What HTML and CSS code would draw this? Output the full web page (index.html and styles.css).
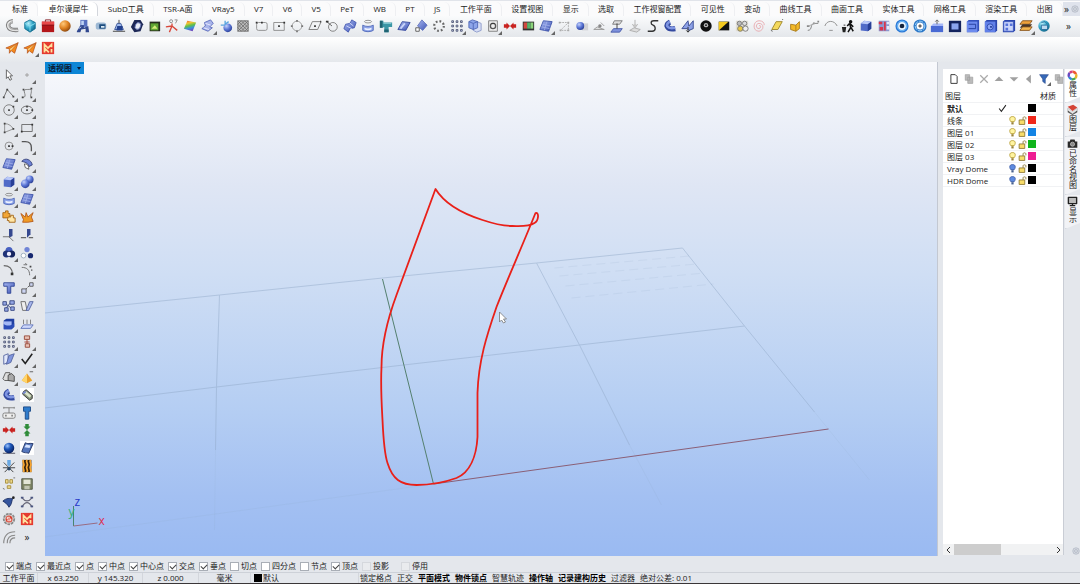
FILE: index.html
```html
<!DOCTYPE html>
<html lang="zh-CN">
<head>
<meta charset="utf-8">
<meta name="viewport" content="width=device-width, initial-scale=1">
<title>透视图</title>
<link rel="stylesheet" href="styles.css">
</head>
<body>
<svg class="sprite" width="0" height="0" aria-hidden="true">
<defs>
<linearGradient id="bl" x1="0" y1="0" x2="1" y2="1"><stop offset="0" stop-color="#a9b9f2"/><stop offset="1" stop-color="#3d53b4"/></linearGradient>
<linearGradient id="rb" x1="0" y1="0" x2="0.3" y2="1"><stop offset="0" stop-color="#e8432f"/><stop offset=".3" stop-color="#f5c534"/><stop offset=".55" stop-color="#5fc24a"/><stop offset=".8" stop-color="#3c8de0"/><stop offset="1" stop-color="#6b4fc0"/></linearGradient>
<radialGradient id="ball" cx=".35" cy=".3" r=".8"><stop offset="0" stop-color="#c3d1fb"/><stop offset=".5" stop-color="#5b76d6"/><stop offset="1" stop-color="#23378c"/></radialGradient>
<radialGradient id="oball" cx=".35" cy=".3" r=".8"><stop offset="0" stop-color="#ffc97a"/><stop offset=".5" stop-color="#e08322"/><stop offset="1" stop-color="#7c3d0c"/></radialGradient>
<radialGradient id="dball" cx=".35" cy=".3" r=".8"><stop offset="0" stop-color="#9cc4ff"/><stop offset=".4" stop-color="#1d56b8"/><stop offset="1" stop-color="#04164f"/></radialGradient>
<radialGradient id="cball" cx=".35" cy=".3" r=".8"><stop offset="0" stop-color="#b8eefa"/><stop offset=".5" stop-color="#2fa4c6"/><stop offset="1" stop-color="#0d5a80"/></radialGradient>
</defs>
<symbol id="pipeg" viewBox="0 0 16 16"><path d="M9 2.500C4 3 3 6 4 9s5 4 11 3.500" fill="none" stroke="#777" stroke-width="5"/><path d="M9 2.500C4 3 3 6 4 9s5 4 11 3.500" fill="none" stroke="#e2e2e2" stroke-width="3"/><path d="M9 3C5 4 4 6 5 9s5 3 10 3" fill="none" stroke="#999"/></symbol>
<symbol id="gem" viewBox="0 0 16 16"><path d="M8 1l6 3v7l-6 4-6-4V4z" fill="url(#cball)" stroke="#147295"/><path d="M2 5l6 3 6-3M8 8v6" stroke="#8ce2f2" fill="none"/></symbol>
<symbol id="toolbox" viewBox="0 0 16 16"><path d="M1 3h14v12H1z" fill="#b3161a"/><path d="M1 3h14v4H1z" fill="#e8494a"/><path d="M5 3V1h6v2M1 7h14" stroke="#7d0d12" fill="none"/></symbol>
<symbol id="osphere" viewBox="0 0 16 16"><circle cx="8" cy="8" r="6.500" fill="url(#oball)"/></symbol>
<symbol id="robot" viewBox="0 0 16 16"><path d="M5 1h8v8H5z" fill="#5770c0"/><path d="M6 2h3v5H6z" fill="#bdd2f4"/><path d="M1 14l4-7h4v3l5-2 1 7h-4v-4l-5 1-1 3H1z" fill="#31488f"/><path d="M3 11l3-2" stroke="#c9d9f6"/></symbol>
<symbol id="pill" viewBox="0 0 16 16"><rect x="2" y="4" width="12" height="8" rx="3" fill="#9db8d4"/><path d="M6 6h7v5H6z" fill="#1b4b7e"/><path d="M8 8h4v2H8z" fill="#dbeaf6"/></symbol>
<symbol id="cone" viewBox="0 0 16 16"><path d="M6 5h4l3 7H3z" fill="#9fb9ec" stroke="#344f93"/><path d="M8 1v4M1 14h14" stroke="#333"/><path d="M6 8h6v5H5z" fill="#22408f"/></symbol>
<symbol id="nut" viewBox="0 0 16 16"><path d="M5 1h7l3 5-3 8-7 1-4-6z" fill="#1d2857"/><ellipse cx="9" cy="8" rx="3" ry="4" fill="#e9edf8" stroke="#6676b4" transform="rotate(25 9 8)"/></symbol>
<symbol id="picg" viewBox="0 0 16 16"><path d="M3 3h12v11H3z" fill="#252b1d"/><path d="M4 5h9v8H4z" fill="#5fa532"/><path d="M5 11l4-4 3 4z" fill="#d4ed7a"/></symbol>
<symbol id="branch" viewBox="0 0 16 16"><path d="M5 15l3-7M8 8l6 5M8 8L1 9M8 8V5" stroke="#d8473a" stroke-width="1.500" fill="none"/><circle cx="7" cy="2.500" r="1.700" fill="none" stroke="#888"/><path d="M11 1h3l-2 4" stroke="#888" fill="none"/></symbol>
<symbol id="rainbow" viewBox="0 0 16 16"><path d="M5 2l10 2-4 10L1 11z" fill="url(#rb)"/></symbol>
<symbol id="net" viewBox="0 0 16 16"><path d="M4 4l7-3 3 4-4 4 3 1-5 4-7-3 4-3z" fill="#a8b4ea" stroke="#5868ba"/><path d="M5 5l6 2M3 10l6 2" stroke="#eef" fill="none"/></symbol>
<symbol id="balls" viewBox="0 0 16 16"><circle cx="10" cy="10" r="5" fill="url(#ball)"/><path d="M2 7h5M7 2v4l4-3" stroke="#57a4df" stroke-width="1.500" fill="none"/></symbol>
<symbol id="hatch" viewBox="0 0 16 16"><path d="M2 2h12v12H2z" fill="#bbb" stroke="#777"/><path d="M2 6l4-4M2 10l8-8M2 14L14 2M6 14l8-8M10 14l4-4M2 10l4 4M2 6l8 8M2 2l12 12M6 2l8 8M10 2l4 4" stroke="#666" stroke-width=".8"/></symbol>
<symbol id="rrect" viewBox="0 0 16 16"><rect x="3" y="4" width="12" height="9" rx="2" fill="none" stroke="#888"/><path d="M2 3h2v2H2zM8 3h2v2H8z" fill="#333"/></symbol>
<symbol id="crect" viewBox="0 0 16 16"><path d="M2 4h12v9H2z" fill="none" stroke="#888"/><path d="M7 7h2v2H7zM13 3h2v2h-2z" fill="#333"/></symbol>
<symbol id="circ" viewBox="0 0 16 16"><circle cx="8" cy="8" r="6" fill="none" stroke="#777"/><path d="M7 7h2v2H7zM12 3h2v2h-2z" fill="#444"/></symbol>
<symbol id="scirc" viewBox="0 0 16 16"><circle cx="8" cy="8" r="4.500" fill="none" stroke="#888"/><path d="M7 7h2v2H7zM11 7h2v2h-2z" fill="#333"/></symbol>
<symbol id="dcirc" viewBox="0 0 16 16"><circle cx="8" cy="8" r="5.500" fill="none" stroke="#999"/><path d="M7 1h2v2H7zM7 13h2v2H7zM1 7h2v2H1zM13 7h2v2h-2z" fill="#777"/></symbol>
<symbol id="para" viewBox="0 0 16 16"><path d="M5 3h10l-4 9H1z" fill="none" stroke="#777"/><path d="M7 7h2v2H7zM14 2h1v2h-1z" fill="#333"/></symbol>
<symbol id="clin" viewBox="0 0 16 16"><circle cx="9" cy="9" r="5" fill="none" stroke="#777"/><path d="M2 3l6 5" stroke="#555"/><path d="M1 2h3v2H1z" fill="#333"/></symbol>
<symbol id="blob" viewBox="0 0 16 16"><path d="M3 6l5-1 2-4 5 3-2 6-5 1-2 4-5-4z" fill="url(#bl)" stroke="#4558b0"/><path d="M4 8l6 3M7 4l5 4" stroke="#d5dcfa"/></symbol>
<symbol id="loft" viewBox="0 0 16 16"><ellipse cx="8" cy="3" rx="4" ry="1.500" fill="none" stroke="#888"/><path d="M2 7c3 2 9 2 12 0v6c-3 2-9 2-12 0z" fill="#8ba2e8" stroke="#5068b8"/><path d="M4 10c2 1 6 1 8 0v2c-2 1-6 1-8 0z" fill="#eef2ff"/></symbol>
<symbol id="tee" viewBox="0 0 16 16"><path d="M1 2h4v2h10v5h-4v6H6V9H5v1H1z" fill="#3b96a5"/><path d="M1 2h3v8H1zM6 12h5v3H6z" fill="#216473"/><path d="M5 5h9" stroke="#8dd2da"/></symbol>
<symbol id="plane" viewBox="0 0 16 16"><path d="M6 3l9 1-5 9-9-1z" fill="url(#bl)" stroke="#33479c"/><path d="M4 11l5-6" stroke="#c9d4fa" stroke-width="2"/></symbol>
<symbol id="plsq" viewBox="0 0 16 16"><path d="M9 1l6 6-5 6-6-5z" fill="url(#bl)" stroke="#6473bd"/><path d="M2 10h4v4H2z" fill="#fff" stroke="#555"/></symbol>
<symbol id="ring8" viewBox="0 0 16 16"><circle cx="8" cy="8" r="5.500" fill="none" stroke="#666" stroke-width="2.500" stroke-dasharray="2 2.300"/></symbol>
<symbol id="array" viewBox="0 0 16 16"><g fill="#ccd3ef" stroke="#4e5674"><path d="M2 2h2v2H2zM7 2h2v2H7zM12 2h2v2h-2zM2 7h2v2H2zM7 7h2v2H7zM12 7h2v2h-2zM2 12h2v2H2zM7 12h2v2H7zM12 12h2v2h-2z"/></g></symbol>
<symbol id="box" viewBox="0 0 16 16"><path d="M2 5l4-3 8 1v8l-4 3-8-1z" fill="#516bc8"/><path d="M2 5l4-3 8 1-4 3z" fill="#b9c8f8"/><path d="M10 6l4-3v8l-4 3z" fill="#283f96"/></symbol>
<symbol id="cubes" viewBox="0 0 16 16"><path d="M6 5l4-2 5 2v8l-5 2-4-2z" fill="#d7def5" stroke="#8a98c9"/><path d="M1 3l4-2 6 2v7l-5 2-5-2z" fill="#8da5ea" stroke="#4e66b5"/><path d="M1 3l5 2 5-2M6 5v7" stroke="#4e66b5" fill="none"/></symbol>
<symbol id="frame" viewBox="0 0 16 16"><path d="M3 2h10v12H3z" fill="#eee" stroke="#777"/><circle cx="8" cy="8" r="3" fill="none" stroke="#555" stroke-width="1.500"/><path d="M6 5h4" stroke="#333"/></symbol>
<symbol id="redarr" viewBox="0 0 16 16"><path d="M1 6h3V4l4 4-4 4v-2H1zM15 6h-3V4L8 8l4 4v-2h3z" fill="#c92320"/></symbol>
<symbol id="grnarr" viewBox="0 0 16 16"><path d="M6 1v3H4l4 4 4-4h-2V1zM6 15v-3H4l4-4 4 4h-2v3z" fill="#2f8c3a"/></symbol>
<symbol id="picr" viewBox="0 0 16 16"><path d="M2 3h13v10H2z" fill="#333"/><path d="M3 4h4v7H3z" fill="#d2493f"/><path d="M7 4h4v7H7z" fill="#57b269"/><path d="M11 4h3v7h-3z" fill="#8bd37b"/></symbol>
<symbol id="pgrid" viewBox="0 0 16 16"><path d="M5 2l10 1-4 11-10-2z" fill="url(#bl)" stroke="#3c51a8"/><path d="M4 6l9 2M3 9l9 2M9 3L6 13" stroke="#a9b8ee" stroke-width=".8"/></symbol>
<symbol id="nodes" viewBox="0 0 16 16"><path d="M3 4h10L4 13h9M13 4v9" fill="none" stroke="#aaa" stroke-dasharray="2 1"/><path d="M2 3h2v2H2zM12 3h2v2h-2zM3 12h2v2H3zM12 12h2v2h-2z" fill="#aaa"/></symbol>
<symbol id="ballg" viewBox="0 0 16 16"><path d="M8 5h7v8H8z" fill="#d2d2d6"/><circle cx="6" cy="8" r="4.500" fill="url(#ball)"/></symbol>
<symbol id="gsmall" viewBox="0 0 16 16"><path d="M2 12l4-3 8 3zM10 4l4 4" fill="#ddd" stroke="#999"/><circle cx="9" cy="8" r="2" fill="#888"/></symbol>
<symbol id="flow" viewBox="0 0 16 16"><path d="M5 2h9l-3 4H3z" fill="#ddd" stroke="#777"/><path d="M4 11h10l-3 4H1z" fill="#7f92dc" stroke="#4558a8"/><path d="M8 5v6" stroke="#333"/></symbol>
<symbol id="garr" viewBox="0 0 16 16"><path d="M8 1v7M5 6l3 4 3-4M2 13l5-3 7 2-4 3z" fill="#ddd" stroke="#aaa"/></symbol>
<symbol id="scurve" viewBox="0 0 16 16"><path d="M14 2H9C5 2 5 6 8 7s4 7-1 7H2" fill="none" stroke="#333" stroke-width="1.500"/></symbol>
<symbol id="bpipe" viewBox="0 0 16 16"><path d="M8 3.500C2 6 4 13 14 11" fill="none" stroke="#33499f" stroke-width="6"/><path d="M8 3C2 6 4 12 14 10" fill="none" stroke="#7f95e2" stroke-width="3"/></symbol>
<symbol id="pflow" viewBox="0 0 16 16"><path d="M1 11l7-9 1 6 5-6v9l-5 2-2-2z" fill="#8ca0e6" stroke="#32458f"/><path d="M8 9v6M6 13l2 2 2-2" stroke="#222" fill="none"/></symbol>
<symbol id="black" viewBox="0 0 16 16"><circle cx="8" cy="8" r="6.500" fill="#111"/><circle cx="8" cy="7" r="2.500" fill="#bbb"/><circle cx="8" cy="7" r="1" fill="#111"/></symbol>
<symbol id="yb" viewBox="0 0 16 16"><path d="M2 3h12v10H2z" fill="#111"/><path d="M2 3h11L2 13z" fill="#f3c91f"/></symbol>
<symbol id="users" viewBox="0 0 16 16"><path d="M1 2h14v12H1z" fill="#e2dfd5"/><circle cx="5" cy="5" r="2.500" fill="#bbb" stroke="#777"/><circle cx="11" cy="5" r="2.500" fill="#ddd" stroke="#777"/><circle cx="6" cy="11" r="3" fill="#e7c744" stroke="#777"/><circle cx="12" cy="11" r="3" fill="#eee" stroke="#777"/></symbol>
<symbol id="spiral" viewBox="0 0 16 16"><path d="M8 8c2-2 3 2 0 3-4 0-4-6 0-6 6 0 6 8 0 9-8 0-7-12 0-12 4 0 6 2 6 5" fill="none" stroke="#e8a8ae"/></symbol>
<symbol id="ypara" viewBox="0 0 16 16"><path d="M7 3h7l-5 9H2z" fill="#f4d95d" stroke="#9b8428"/><path d="M1 13l2 1M14 1l1-1" stroke="#555"/></symbol>
<symbol id="yfold" viewBox="0 0 16 16"><path d="M3 6l6 1 4-4v8l-4 3-6-2z" fill="#f3b928" stroke="#a87918"/><path d="M9 7v7" stroke="#a87918"/></symbol>
<symbol id="cnode" viewBox="0 0 16 16"><path d="M2 13C8 13 4 5 10 5h4" fill="none" stroke="#777"/><path d="M1 7h3v2H1zM8 4h2v2H8zM13 2h2v2h-2z" fill="#888"/><path d="M3 8l7-3" stroke="#aaa"/></symbol>
<symbol id="tarc" viewBox="0 0 16 16"><path d="M1 8C3 1 12 1 15 8M6 13h4" fill="none" stroke="#888"/></symbol>
<symbol id="man" viewBox="0 0 16 16"><circle cx="11" cy="3" r="2" fill="#111"/><path d="M10 5l-3 3M10 5l1 5-3 5M11 9l3 5M10 5l4 4" stroke="#111" stroke-width="1.700" fill="none"/><path d="M1 9h5l-1 6H2z" fill="#222"/><path d="M3 7h2" stroke="#222"/></symbol>
<symbol id="redgrid" viewBox="0 0 16 16"><path d="M2 2h12v12H2z" fill="#8b97cf"/><path d="M2 3h4v3H2zM3 9h4v4H3zM8 3h2v10H8z" fill="#d8364e"/><path d="M11 3h3v3h-3zM11 8h3v4h-3z" fill="#e5e8f9"/></symbol>
<symbol id="bring" viewBox="0 0 16 16"><circle cx="8" cy="8" r="7.500" fill="#2a78d6"/><circle cx="8" cy="8" r="5.500" fill="none" stroke="#82c9ff"/><circle cx="8" cy="8" r="4.500" fill="#eaf5ff"/><circle cx="8" cy="8" r="2.700" fill="#14233f"/></symbol>
<symbol id="bplus" viewBox="0 0 16 16"><circle cx="8" cy="8" r="7.500" fill="#2d78c8"/><circle cx="8" cy="8" r="5.500" fill="none" stroke="#a5dcff" stroke-dasharray="5 1"/><circle cx="8" cy="8" r="4" fill="#fff"/><path d="M8 6v4M6 8h4" stroke="#222"/></symbol>
<symbol id="bopen" viewBox="0 0 16 16"><path d="M1 8h14v7H1z" fill="#496ad4"/><path d="M1 8l3-3h11v3z" fill="#a5b8f8"/><path d="M8 6V2M6 3l2-2 2 2" stroke="#555" fill="none"/></symbol>
<symbol id="bsq" viewBox="0 0 16 16"><path d="M1 2h14v13H1z" fill="#14245f"/><path d="M4 5h8v7H4z" fill="#8ba5f0"/></symbol>
<symbol id="bslot" viewBox="0 0 16 16"><path d="M1 3l2-2h12v12l-2 2H1z" fill="#3552bd"/><path d="M1 3h12v12H1z" fill="#6d8bee"/><path d="M3 6h8v5H3" fill="none" stroke="#203a98"/></symbol>
<symbol id="bcirc" viewBox="0 0 16 16"><path d="M1 3l2-2h12v12l-2 2H1z" fill="#2b46ad"/><path d="M1 3h12v12H1z" fill="#6180e8"/><circle cx="7" cy="9" r="3.500" fill="#8aa3f4" stroke="#2945a8"/><path d="M7 8h2v2H7z" fill="#203a98"/></symbol>
<symbol id="bgrid" viewBox="0 0 16 16"><path d="M1 3l2-2h12v12l-2 2H1z" fill="#2b46ad"/><path d="M2 3h11v11H2z" fill="#cbd6fb" stroke="#3b57bd"/><path d="M4 5h3v3H4zM9 5h3v3H9zM4 10h3v3H4z" fill="#5673da"/></symbol>
<symbol id="stack" viewBox="0 0 16 16"><path d="M4 2h11l-3 4H1z" fill="#efa23c" stroke="#83501a"/><path d="M4 6h11l-3 4H1z" fill="#4a3728"/><path d="M4 9h11l-3 4H1z" fill="#f3b54f" stroke="#83501a"/></symbol>
<symbol id="cube3" viewBox="0 0 16 16"><circle cx="8" cy="8" r="6.500" fill="url(#cball)"/><path d="M5 7h7v5H5z" fill="#bcd9ef" stroke="#266a9a"/><path d="M5 4l4-1 3 3" stroke="#266a9a" fill="none"/></symbol>
<symbol id="send" viewBox="0 0 16 16"><path d="M1 8l14-6-4 12-4-3-2 3v-5z" fill="#f58a1c" stroke="#b34f18" stroke-width=".8"/><path d="M5 9l10-7-8 9" fill="#ffd27a" stroke="#b34f18" stroke-width=".6"/></symbol>
<symbol id="mlogo" viewBox="0 0 16 16"><path d="M1 1h14v14H1z" fill="#e5392f"/><path d="M4 13V4l4 4 4-4v3M12 9v4M4 8l5 5" fill="none" stroke="#ffe3a0" stroke-width="2"/></symbol>
<symbol id="pointer" viewBox="0 0 16 16"><path d="M5 2l7 7H9l2 4-2 1-2-4-2 2z" fill="#fff" stroke="#555"/></symbol>
<symbol id="dot" viewBox="0 0 16 16"><circle cx="8" cy="8" r="1.300" fill="#fff" stroke="#888"/></symbol>
<symbol id="poly" viewBox="0 0 16 16"><path d="M2 13l4-9 7 8" fill="none" stroke="#666"/><path d="M1 12h2v2H1zM5 3h2v2H5zM12 11h2v2h-2z" fill="#444"/></symbol>
<symbol id="cpts" viewBox="0 0 16 16"><path d="M3 13C10 13 1 4 7 4s6-1 6 2-2 6 0 7" fill="none" stroke="#777"/><path d="M2 12h2v2H2zM3 3h2v2H3zM12 2h2v2h-2zM12 12h2v2h-2z" fill="#444"/></symbol>
<symbol id="ell" viewBox="0 0 16 16"><ellipse cx="8" cy="8" rx="6.500" ry="4.500" fill="none" stroke="#666"/><path d="M7 7h2v2H7zM7 3h2v2H7zM13 7h2v2h-2z" fill="#444"/></symbol>
<symbol id="arc" viewBox="0 0 16 16"><path d="M3 3c5 0 8 3 10 6M3 3v10l10-4" fill="none" stroke="#888"/><path d="M2 2h2v2H2zM2 12h2v2H2zM12 8h2v2h-2z" fill="#444"/></symbol>
<symbol id="rect" viewBox="0 0 16 16"><path d="M2 4h12v8H2z" fill="none" stroke="#666"/><path d="M1 11h2v2H1zM13 3h2v2h-2z" fill="#333"/></symbol>
<symbol id="fil" viewBox="0 0 16 16"><path d="M2 3h4c5 0 7 3 7 7v4" fill="none" stroke="#555" stroke-width="1.500"/></symbol>
<symbol id="bend" viewBox="0 0 16 16"><path d="M2 5c4-5 11-2 12 4l-4 2c0-3-3-5-8-6z" fill="#6d82d5" stroke="#333f77"/><path d="M5 8c3 0 5 1 5 6l-4-2z" fill="#fff" stroke="#555"/></symbol>
<symbol id="sph2" viewBox="0 0 16 16"><circle cx="11" cy="5" r="4.500" fill="url(#ball)"/><circle cx="6" cy="10" r="5" fill="url(#ball)"/></symbol>
<symbol id="puz" viewBox="0 0 16 16"><path d="M1 3h3V1h3v3h2v5H1z" fill="#f2a636" stroke="#a26314"/><path d="M7 8h3V6h3v3h2v5H8v-2H6z" fill="#ffe6a6" stroke="#a26314"/></symbol>
<symbol id="expl" viewBox="0 0 16 16"><path d="M1 4l5 4 1-5 2 5 6-5-2 5 2 5-6 1H3l1-3z" fill="#ef9a25" stroke="#b5591a"/></symbol>
<symbol id="trim" viewBox="0 0 16 16"><path d="M8 1h4v8l-4 2z" fill="#35488f"/><path d="M1 10h8M8 10l5 5" stroke="#666"/></symbol>
<symbol id="split" viewBox="0 0 16 16"><path d="M8 1h4v6l-4 4z" fill="#35488f"/><path d="M1 11h6M10 11h5" stroke="#666" stroke-width="1.500"/></symbol>
<symbol id="bool" viewBox="0 0 16 16"><circle cx="8" cy="5" r="4" fill="#4760c0"/><circle cx="5" cy="9" r="4" fill="#1f3278"/><circle cx="11" cy="9" r="4" fill="#16245f"/><circle cx="8" cy="9" r="2.500" fill="#eef"/></symbol>
<symbol id="dots3" viewBox="0 0 16 16"><circle cx="8" cy="4" r="3" fill="#7084d6"/><circle cx="4" cy="11" r="2.700" fill="#fff" stroke="#9ab"/><circle cx="12" cy="11" r="3" fill="#16276f"/></symbol>
<symbol id="arc2" viewBox="0 0 16 16"><path d="M2 3c6 0 10 3 10 10" fill="none" stroke="#666" stroke-width="1.300"/><path d="M10 11h3v3h-3z" fill="#333"/></symbol>
<symbol id="arc3" viewBox="0 0 16 16"><path d="M2 5c6 0 9 3 9 9M4 2h4l-2-2" fill="none" stroke="#666"/><path d="M11 4h2M13 8h1" stroke="#444" stroke-width="2"/></symbol>
<symbol id="text" viewBox="0 0 16 16"><path d="M2 2h12v4H10v8H6V6H2z" fill="url(#bl)" stroke="#2c4294"/></symbol>
<symbol id="scale" viewBox="0 0 16 16"><path d="M2 9h5v5H2zM11 2h4v4h-4z" fill="#ccd4f2" stroke="#555"/><path d="M7 9l4-4" stroke="#555" stroke-dasharray="2 1"/></symbol>
<symbol id="group" viewBox="0 0 16 16"><g fill="#96a8e6" stroke="#36467f"><path d="M1 3h4v4H1zM9 2h5v4H9zM3 10h4v4H3zM10 9h4v4h-4z"/></g><path d="M5 6l5 4M9 5l-4 5" stroke="#36467f"/></symbol>
<symbol id="planes" viewBox="0 0 16 16"><path d="M1 3h5l2 10H3z" fill="#eee" stroke="#666"/><path d="M11 3h4l-5 10H7z" fill="#a8b7ec" stroke="#53639f"/></symbol>
<symbol id="solid" viewBox="0 0 16 16"><path d="M2 4l3-2h9v9l-3 3H2z" fill="#1f3fa2"/><path d="M2 5h9v9H2z" fill="#a5b9f5"/><path d="M2 8c4 3 8 2 12-1v4l-3 3H2z" fill="#2c4db8"/></symbol>
<symbol id="extr" viewBox="0 0 16 16"><path d="M4 9h11l-3 4H1z" fill="#cdd7fa" stroke="#5c70b9"/><path d="M4 8V3M8 8V3M12 8V3" stroke="#777"/></symbol>
<symbol id="align" viewBox="0 0 16 16"><path d="M5 1h6v4H5zM6 10h5v4H6z" fill="#e8c0b4" stroke="#934332"/><path d="M8 5v5M5 8h6" stroke="#a23c2c"/></symbol>
<symbol id="rotp" viewBox="0 0 16 16"><path d="M2 4l5-2v10l-5 2z" fill="#e2e8fb" stroke="#53639f"/><path d="M8 4l6-2-4 10-5 2z" fill="#8095dd" stroke="#53639f"/></symbol>
<symbol id="check" viewBox="0 0 16 16"><path d="M2 8l4 5 8-11" fill="none" stroke="#222" stroke-width="1.800"/></symbol>
<symbol id="gcub" viewBox="0 0 16 16"><path d="M1 10l3-7h5v9H3z" fill="#ddd" stroke="#555"/><path d="M7 12V6l4-2 3 3v6z" fill="#aaa" stroke="#444"/></symbol>
<symbol id="pyr" viewBox="0 0 16 16"><path d="M8 4l6 8-6 3-6-3z" fill="#e9a02a"/><path d="M8 4v11l-6-3z" fill="#ffd66b"/><path d="M11 2h4" stroke="#555"/></symbol>
<symbol id="caps" viewBox="0 0 16 16"><path d="M4 4l3-2 7 6v4l-3 2-8-7z" fill="#87917a" stroke="#333"/><path d="M6 5l6 5" stroke="#dbe4c9" stroke-width="3"/><path d="M3 5l3-2 1 2-3 2z" fill="#7789ce"/></symbol>
<symbol id="dim" viewBox="0 0 16 16"><path d="M2 2h12M8 2v6M2 1v2M14 1v2" stroke="#777"/><rect x="1" y="8" width="14" height="6" rx="2" fill="#eee" stroke="#777"/><path d="M4 11h1M11 11h1" stroke="#222" stroke-width="2"/></symbol>
<symbol id="bolt" viewBox="0 0 16 16"><path d="M4 1h8v5h-2v9H6V6H4z" fill="#2e7bcb" stroke="#174785"/></symbol>
<symbol id="dsph" viewBox="0 0 16 16"><path d="M1 14h14" stroke="#445"/><circle cx="8" cy="8" r="6" fill="url(#dball)"/></symbol>
<symbol id="sheet" viewBox="0 0 16 16"><path d="M6 2c3 2 5 0 9 1l-5 11c-3-1-5 0-8-2z" fill="#5577bd" stroke="#203264"/><path d="M7 4l5 1-1 3-6-1z" fill="#d9e6ff"/></symbol>
<symbol id="spider" viewBox="0 0 16 16"><path d="M8 10L2 4M8 10l6-6M8 10H1M8 10h7M8 10l-5 5M8 10l5 5" stroke="#333"/><path d="M6 1h4v5l-2 3-2-3z" fill="#69a8e3"/><circle cx="8" cy="11" r="2" fill="#2b4869"/></symbol>
<symbol id="waves" viewBox="0 0 16 16"><path d="M3 1h10v14H3z" fill="#34220e"/><path d="M4 1c-2 3 2 4 0 7s2 4 0 7M8 1c-2 3 2 4 0 7s2 4 0 7M12 1c-2 3 2 4 0 7s2 4 0 7" fill="none" stroke="#f5a431" stroke-width="2"/></symbol>
<symbol id="ynode" viewBox="0 0 16 16"><path d="M4 3h3v4H4zM9 3h3v4H9zM6 10h4v3H6z" fill="#efd989" stroke="#a28b3c"/><path d="M1 13l2 1M13 1h2" stroke="#666"/></symbol>
<symbol id="disk" viewBox="0 0 16 16"><path d="M2 2h12v12H2z" fill="#7f8666" stroke="#4d5240"/><path d="M4 3h8v5H4z" fill="#e4e6d7"/><path d="M5 10h6v4H5z" fill="#c2c5b2"/></symbol>
<symbol id="bsheet" viewBox="0 0 16 16"><path d="M1 7c4-4 8-3 11-3-1 4-1 7-4 10-2-4-4-5-7-7z" fill="#35559e" stroke="#1d3063"/><circle cx="13" cy="3" r="1.500" fill="#222"/></symbol>
<symbol id="xcur" viewBox="0 0 16 16"><path d="M2 3c4 5 8 5 12 0M2 14c4-7 8-7 12 0" fill="none" stroke="#667" stroke-width="1.300"/><path d="M1 2h3v2H1zM12 2h3v2h-3zM1 12h3v2H1zM12 12h3v2h-3z" fill="#4b5681"/></symbol>
<symbol id="rgear" viewBox="0 0 16 16"><circle cx="8" cy="8" r="6" fill="#d8d8d8" stroke="#888" stroke-width="2" stroke-dasharray="3 1"/><circle cx="8" cy="8" r="4" fill="#d74434"/><path d="M9 6H6v2h4v2H6" stroke="#fff" fill="none"/></symbol>
<symbol id="arcs" viewBox="0 0 16 16"><path d="M2 15C2 7 6 2 15 2M6 15c0-6 3-9 9-9M9 15c0-4 2-6 6-6" fill="none" stroke="#888" stroke-width="1.300"/></symbol>
<symbol id="page" viewBox="0 0 16 16"><path d="M3 1h7l3 3v11H3z" fill="#fff" stroke="#333" stroke-width="1.500"/></symbol>
<symbol id="copy" viewBox="0 0 16 16"><path d="M2 1h7v9H2zM6 5h8v10H6z" fill="#bbb" stroke="#999"/></symbol>
<symbol id="del" viewBox="0 0 16 16"><path d="M2 2l12 12M14 2L2 14" stroke="#aaa" stroke-width="2"/></symbol>
<symbol id="up" viewBox="0 0 16 16"><path d="M1 11l7-7 7 7z" fill="#a0a0a0"/></symbol>
<symbol id="down" viewBox="0 0 16 16"><path d="M1 5l7 7 7-7z" fill="#a0a0a0"/></symbol>
<symbol id="left" viewBox="0 0 16 16"><path d="M11 1L3 8l8 7z" fill="#a0a0a0"/></symbol>
<symbol id="funnel" viewBox="0 0 16 16"><path d="M1 1h14l-5 7v7l-4-3V8z" fill="#3669b8" stroke="#284a8d"/></symbol>
<symbol id="bulb" viewBox="0 0 16 16"><path d="M8 1c-7 0-5 7-3 9h6c2-2 4-9-3-9z" fill="#fff4a0" stroke="#b49a30" stroke-width="1.500"/><path d="M6 11h4v4H6z" fill="#998238"/></symbol>
<symbol id="bulbb" viewBox="0 0 16 16"><path d="M8 1c-7 0-5 7-3 9h6c2-2 4-9-3-9z" fill="#5e8be0" stroke="#3a5aa5" stroke-width="1.500"/><path d="M6 11h4v4H6z" fill="#47608f"/></symbol>
<symbol id="lock" viewBox="0 0 16 16"><path d="M9 7V3c0-2 5-2 5 0v3" fill="none" stroke="#8b7632" stroke-width="1.500"/><path d="M2 7h10v8H2z" fill="#f8dc69" stroke="#8b7632" stroke-width="1.500"/></symbol>
<symbol id="wheel" viewBox="0 0 16 16"><g fill="none" stroke-width="3.500"><path d="M8 2.500A5.500 5.500 0 0 1 13 6" stroke="#ee5a32"/><path d="M13 6a5.500 5.500 0 0 1-1 6" stroke="#e8b52d"/><path d="M12 12a5.500 5.500 0 0 1-5 1.500" stroke="#48a94e"/><path d="M7 13.500A5.500 5.500 0 0 1 3 10" stroke="#2f8ad4"/><path d="M3 10a5.500 5.500 0 0 1 1-6" stroke="#6a4bc2"/><path d="M4 4a5.500 5.500 0 0 1 4-1.500" stroke="#d3407f"/></g></symbol>
<symbol id="layers" viewBox="0 0 16 16"><path d="M1 9l7 5 7-5v3l-7 4-7-4z" fill="#555"/><path d="M1 6l7 5 7-5v3l-7 5-7-5z" fill="#eee" stroke="#888" stroke-width=".5"/><path d="M1 4l8-3 6 4-7 5z" fill="#d44336"/></symbol>
<symbol id="cam" viewBox="0 0 16 16"><path d="M1 5h3l1-3h6l1 3h3v9H1z" fill="#2a2a2a"/><circle cx="8" cy="9" r="3" fill="#888" stroke="#ccc"/></symbol>
<symbol id="mon" viewBox="0 0 16 16"><path d="M2 2h12v9H2z" fill="#bbb" stroke="#222" stroke-width="2" stroke-linejoin="round"/><path d="M8 11v3M4 14h8" stroke="#222" stroke-width="2"/></symbol>
<symbol id="gear" viewBox="0 0 16 16"><circle cx="8" cy="8" r="6.500" fill="#d6dae2" stroke="#9da4b2"/><circle cx="8" cy="8" r="3" fill="none" stroke="#9da4b2"/></symbol>
</svg>

<header class="ribbon">
  <nav class="tabs" aria-label="工具列">
    <button class="tab">标准</button>
    <button class="tab tab-active">卓尔谟犀牛</button>
    <button class="tab">SubD工具</button>
    <button class="tab">TSR-A面</button>
    <button class="tab">VRay5</button>
    <button class="tab">V7</button>
    <button class="tab">V6</button>
    <button class="tab">V5</button>
    <button class="tab">PeT</button>
    <button class="tab">WB</button>
    <button class="tab">PT</button>
    <button class="tab">JS</button>
    <button class="tab">工作平面</button>
    <button class="tab">设置视图</button>
    <button class="tab">显示</button>
    <button class="tab">选取</button>
    <button class="tab">工作视窗配置</button>
    <button class="tab">可见性</button>
    <button class="tab">变动</button>
    <button class="tab">曲线工具</button>
    <button class="tab">曲面工具</button>
    <button class="tab">实体工具</button>
    <button class="tab">网格工具</button>
    <button class="tab">渲染工具</button>
    <button class="tab">出图</button>
    <span class="tabs-end"><button class="more">»</button><button class="tool tool-small" title="选项"><svg><use href="#gear"/></svg></button></span>
  </nav>
  <div class="bar">
    <div class="bar-tools">
      <button class="tool" title="圆管"><svg><use href="#pipeg"/></svg></button>
      <button class="tool" title="宝石"><svg><use href="#gem"/></svg></button>
      <button class="tool" title="工具箱"><svg><use href="#toolbox"/></svg></button>
      <button class="tool" title="材质球"><svg><use href="#osphere"/></svg></button>
      <button class="tool" title="机械"><svg><use href="#robot"/></svg></button>
      <button class="tool" title="胶囊"><svg><use href="#pill"/></svg></button>
      <button class="tool" title="锥体"><svg><use href="#cone"/></svg></button>
      <button class="tool" title="螺母"><svg><use href="#nut"/></svg></button>
      <button class="tool" title="图像"><svg><use href="#picg"/></svg></button>
      <button class="tool" title="分支"><svg><use href="#branch"/></svg></button>
      <button class="tool" title="曲率分析"><svg><use href="#rainbow"/></svg></button>
      <button class="tool fly" title="网线"><svg><use href="#net"/></svg></button>
      <button class="tool" title="球体"><svg><use href="#balls"/></svg></button>
      <button class="tool" title="剖面线"><svg><use href="#hatch"/></svg></button>
      <button class="tool" title="圆角矩形"><svg><use href="#rrect"/></svg></button>
      <button class="tool" title="中心矩形"><svg><use href="#crect"/></svg></button>
      <button class="tool" title="圆"><svg><use href="#dcirc"/></svg></button>
      <button class="tool" title="平面"><svg><use href="#para"/></svg></button>
      <button class="tool" title="相切圆"><svg><use href="#clin"/></svg></button>
      <button class="tool" title="曲面"><svg><use href="#blob"/></svg></button>
      <button class="tool" title="放样"><svg><use href="#loft"/></svg></button>
      <button class="tool" title="三通"><svg><use href="#tee"/></svg></button>
      <button class="tool" title="混接"><svg><use href="#plane"/></svg></button>
      <button class="tool" title="投影面"><svg><use href="#plsq"/></svg></button>
      <button class="tool" title="环形阵列"><svg><use href="#ring8"/></svg></button>
      <button class="tool fly" title="矩形阵列"><svg><use href="#array"/></svg></button>
      <button class="tool" title="方块组"><svg><use href="#cubes"/></svg></button>
      <button class="tool fly" title="框架"><svg><use href="#frame"/></svg></button>
      <button class="tool" title="匹配"><svg><use href="#redarr"/></svg></button>
      <button class="tool" title="贴图"><svg><use href="#picr"/></svg></button>
      <button class="tool fly" title="重建曲面"><svg><use href="#pgrid"/></svg></button>
      <button class="tool" title="控制点"><svg><use href="#nodes"/></svg></button>
      <button class="tool" title="球"><svg><use href="#ballg"/></svg></button>
      <button class="tool" title="网格"><svg><use href="#gsmall"/></svg></button>
      <button class="tool" title="流动"><svg><use href="#flow"/></svg></button>
      <button class="tool" title="投影"><svg><use href="#garr"/></svg></button>
      <button class="tool" title="曲线"><svg><use href="#scurve"/></svg></button>
      <button class="tool" title="弯管"><svg><use href="#bpipe"/></svg></button>
      <button class="tool" title="沿曲面流动"><svg><use href="#pflow"/></svg></button>
      <button class="tool" title="黑球"><svg><use href="#black"/></svg></button>
      <button class="tool" title="反转"><svg><use href="#yb"/></svg></button>
      <button class="tool" title="群组"><svg><use href="#users"/></svg></button>
      <button class="tool" title="螺旋"><svg><use href="#spiral"/></svg></button>
      <button class="tool" title="切割平面"><svg><use href="#ypara"/></svg></button>
      <button class="tool" title="折叠面"><svg><use href="#yfold"/></svg></button>
      <button class="tool" title="节点"><svg><use href="#cnode"/></svg></button>
      <button class="tool" title="弧线"><svg><use href="#tarc"/></svg></button>
      <button class="tool" title="清理"><svg><use href="#man"/></svg></button>
      <button class="tool" title="立方体"><svg><use href="#box"/></svg></button>
      <button class="tool" title="图块"><svg><use href="#redgrid"/></svg></button>
      <button class="tool" title="圆孔"><svg><use href="#bring"/></svg></button>
      <button class="tool" title="定位孔"><svg><use href="#bplus"/></svg></button>
      <button class="tool" title="挤出"><svg><use href="#bopen"/></svg></button>
      <button class="tool" title="边框"><svg><use href="#bsq"/></svg></button>
      <button class="tool" title="凹槽"><svg><use href="#bslot"/></svg></button>
      <button class="tool" title="打孔"><svg><use href="#bcirc"/></svg></button>
      <button class="tool" title="阵列孔"><svg><use href="#bgrid"/></svg></button>
      <button class="tool fly" title="图层堆叠"><svg><use href="#stack"/></svg></button>
      <button class="tool" title="渲染"><svg><use href="#cube3"/></svg></button>
    </div>
    <button class="more">»</button>
  </div>
  <div class="bar bar-second">
    <button class="tool" title="发送"><svg><use href="#send"/></svg></button>
    <button class="tool fly" title="发送选取"><svg><use href="#send"/></svg></button>
    <button class="tool" title="插件"><svg><use href="#mlogo"/></svg></button>
  </div>
</header>

<main class="workspace">
  <aside class="palette">
    <button class="tool" title="选取"><svg><use href="#pointer"/></svg></button>
    <button class="tool fly" title="单点"><svg><use href="#dot"/></svg></button>
    <button class="tool fly" title="多重直线"><svg><use href="#poly"/></svg></button>
    <button class="tool fly" title="控制点曲线"><svg><use href="#cpts"/></svg></button>
    <button class="tool fly" title="圆"><svg><use href="#circ"/></svg></button>
    <button class="tool fly" title="椭圆"><svg><use href="#ell"/></svg></button>
    <button class="tool fly" title="圆弧"><svg><use href="#arc"/></svg></button>
    <button class="tool fly" title="矩形"><svg><use href="#rect"/></svg></button>
    <button class="tool fly" title="多边形"><svg><use href="#scirc"/></svg></button>
    <button class="tool fly" title="曲线圆角"><svg><use href="#fil"/></svg></button>
    <button class="tool fly" title="曲面"><svg><use href="#pgrid"/></svg></button>
    <button class="tool fly" title="曲面圆角"><svg><use href="#bend"/></svg></button>
    <button class="tool fly" title="立方体"><svg><use href="#box"/></svg></button>
    <button class="tool fly" title="布尔运算"><svg><use href="#sph2"/></svg></button>
    <button class="tool fly" title="放样"><svg><use href="#loft"/></svg></button>
    <button class="tool fly" title="网格"><svg><use href="#pgrid"/></svg></button>
    <button class="tool" title="组合"><svg><use href="#puz"/></svg></button>
    <button class="tool" title="炸开"><svg><use href="#expl"/></svg></button>
    <button class="tool" title="修剪"><svg><use href="#trim"/></svg></button>
    <button class="tool" title="分割"><svg><use href="#split"/></svg></button>
    <button class="tool fly" title="群组"><svg><use href="#bool"/></svg></button>
    <button class="tool" title="解散群组"><svg><use href="#dots3"/></svg></button>
    <button class="tool" title="编辑点"><svg><use href="#arc2"/></svg></button>
    <button class="tool fly" title="调整曲线"><svg><use href="#arc3"/></svg></button>
    <button class="tool" title="文字"><svg><use href="#text"/></svg></button>
    <button class="tool fly" title="缩放"><svg><use href="#scale"/></svg></button>
    <button class="tool" title="复制"><svg><use href="#group"/></svg></button>
    <button class="tool" title="镜像"><svg><use href="#planes"/></svg></button>
    <button class="tool fly" title="实体"><svg><use href="#solid"/></svg></button>
    <button class="tool fly" title="挤出"><svg><use href="#extr"/></svg></button>
    <button class="tool fly" title="阵列"><svg><use href="#array"/></svg></button>
    <button class="tool fly" title="对齐"><svg><use href="#align"/></svg></button>
    <button class="tool fly" title="旋转"><svg><use href="#rotp"/></svg></button>
    <button class="tool fly" title="检查"><svg><use href="#check"/></svg></button>
    <button class="tool fly" title="图块"><svg><use href="#gcub"/></svg></button>
    <button class="tool fly" title="棱锥"><svg><use href="#pyr"/></svg></button>
    <button class="tool" title="圆管"><svg><use href="#bpipe"/></svg></button>
    <button class="tool lit" title="胶囊"><svg><use href="#caps"/></svg></button>
    <button class="tool" title="尺寸"><svg><use href="#dim"/></svg></button>
    <button class="tool" title="螺栓"><svg><use href="#bolt"/></svg></button>
    <button class="tool" title="水平匹配"><svg><use href="#redarr"/></svg></button>
    <button class="tool" title="垂直匹配"><svg><use href="#grnarr"/></svg></button>
    <button class="tool" title="渲染"><svg><use href="#dsph"/></svg></button>
    <button class="tool lit" title="曲面展平"><svg><use href="#sheet"/></svg></button>
    <button class="tool" title="节点"><svg><use href="#spider"/></svg></button>
    <button class="tool" title="波纹"><svg><use href="#waves"/></svg></button>
    <button class="tool" title="关联"><svg><use href="#ynode"/></svg></button>
    <button class="tool" title="保存"><svg><use href="#disk"/></svg></button>
    <button class="tool" title="曲面编辑"><svg><use href="#bsheet"/></svg></button>
    <button class="tool" title="曲线网络"><svg><use href="#xcur"/></svg></button>
    <button class="tool" title="设置"><svg><use href="#rgear"/></svg></button>
    <button class="tool" title="插件"><svg><use href="#mlogo"/></svg></button>
    <button class="tool" title="偏移"><svg><use href="#arcs"/></svg></button>
    <button class="more">»</button>
  </aside>

  <section class="viewport">
    <svg class="scene" viewBox="45 62 893 494" preserveAspectRatio="xMidYMid slice" role="img" aria-label="曲线">
      <g fill="none" stroke="#8fa7c6" stroke-width="1" opacity=".45">
        <path d="M45 313L220 295L383 278L537 263L683 248"/>
        <path d="M45 408L217 387L404 365L580 345L745 326"/>
        <path d="M683 248L745 326L815 412"/>
        <path d="M537 263L580 345L630 445"/>
        <path d="M220 295L217 387L216 450"/>
      </g>
      <g fill="none" stroke="#8fa7c6" opacity=".14">
        <path d="M815 412L870 480M630 445L662 505M216 450L215 530M45 537L216 514L434 484"/>
        <path d="M555 268L690 256M560 276L697 264M566 286L705 273M572 298L714 284" stroke-dasharray="9 5"/>
      </g>
      <path d="M383 279L434 484" stroke="#54806f" fill="none"/>
      <path d="M434 484L829 429" stroke="#8a5f76" fill="none"/>
      <path d="M436 189L397 295C387 322 382 344 382 367C381 386 382 402 383 420C384 442 385 454 388 463C393 479 401 485 417 485C429 485 446 482 457 478C471 472 477 455 478 437C478 421 478 408 478 393C479 361 487 336 497 307C508 279 524 243 536 213C540 212 539 221 535 223C529 227 520 226 513 226C502 226 492 223 483 220C461 213 444 202 436 189Z" fill="none" stroke="#e92019" stroke-width="1.800" stroke-linejoin="round"/>
      <path d="M500 312v10l2-2 2 3 2-1-2-3h3z" fill="#fff" stroke="#777" stroke-width=".8"/>
      <g fill="none"><path d="M74 526V506" stroke="#46866f"/><path d="M74 526L98 523" stroke="#996c82"/></g>
      <text x="75" y="506" class="axis axis-z">z</text>
      <text x="69" y="516" class="axis axis-y">y</text>
      <text x="99" y="525" class="axis axis-x">x</text>
    </svg>
    <button class="view-title"><b>透视图</b><span class="caret"></span></button>
  </section>

  <aside class="panel">
    <div class="panel-tools">
      <button class="tool" title="新图层"><svg><use href="#page"/></svg></button>
      <button class="tool" title="新子图层"><svg><use href="#copy"/></svg></button>
      <button class="tool" title="删除"><svg><use href="#del"/></svg></button>
      <button class="tool" title="上移"><svg><use href="#up"/></svg></button>
      <button class="tool" title="下移"><svg><use href="#down"/></svg></button>
      <button class="tool" title="上一级"><svg><use href="#left"/></svg></button>
      <button class="tool fly" title="过滤器"><svg><use href="#funnel"/></svg></button>
      <button class="tool" title="更多"><svg><use href="#copy"/></svg></button>
    </div>
    <table class="layers">
      <thead><tr><th class="c-name">图层</th><th class="c-ico"></th><th class="c-ico"></th><th class="c-ico"></th><th class="c-ico"></th><th class="c-mat">材质</th></tr></thead>
      <tbody>
        <tr class="current"><td>默认</td><td><svg><use href="#check"/></svg></td><td></td><td></td><td><i class="swatch black"></i></td><td></td></tr>
        <tr><td>线条</td><td></td><td><svg><use href="#bulb"/></svg></td><td><svg><use href="#lock"/></svg></td><td><i class="swatch red"></i></td><td></td></tr>
        <tr><td>图层 01</td><td></td><td><svg><use href="#bulb"/></svg></td><td><svg><use href="#lock"/></svg></td><td><i class="swatch blue"></i></td><td></td></tr>
        <tr><td>图层 02</td><td></td><td><svg><use href="#bulb"/></svg></td><td><svg><use href="#lock"/></svg></td><td><i class="swatch green"></i></td><td></td></tr>
        <tr><td>图层 03</td><td></td><td><svg><use href="#bulb"/></svg></td><td><svg><use href="#lock"/></svg></td><td><i class="swatch pink"></i></td><td></td></tr>
        <tr><td>Vray Dome</td><td></td><td><svg><use href="#bulbb"/></svg></td><td><svg><use href="#lock"/></svg></td><td><i class="swatch black"></i></td><td></td></tr>
        <tr><td>HDR Dome</td><td></td><td><svg><use href="#bulbb"/></svg></td><td><svg><use href="#lock"/></svg></td><td><i class="swatch black"></i></td><td></td></tr>
      </tbody>
    </table>
    <div class="scroll">
      <button class="arrow" title="向左"><svg viewBox="0 0 8 8"><path d="M5 1L2 4l3 3"/></svg></button>
      <div class="track"><div class="thumb"></div></div>
      <button class="arrow" title="向右"><svg viewBox="0 0 8 8"><path d="M3 1l3 3-3 3"/></svg></button>
    </div>
  </aside>

  <nav class="side" aria-label="面板">
    <button class="side-tab side-active"><svg><use href="#wheel"/></svg><span>属性</span></button>
    <button class="side-tab"><svg><use href="#layers"/></svg><span>图层</span></button>
    <button class="side-tab"><svg><use href="#cam"/></svg><span>已命名视图</span></button>
    <button class="side-tab"><svg><use href="#mon"/></svg><span>显示</span></button>
    <button class="tool tool-small side-gear" title="面板选项"><svg><use href="#gear"/></svg></button>
  </nav>
</main>

<footer class="foot">
  <div class="snaps">
    <label><input type="checkbox" checked>端点</label>
    <label><input type="checkbox" checked>最近点</label>
    <label><input type="checkbox" checked>点</label>
    <label><input type="checkbox" checked>中点</label>
    <label><input type="checkbox" checked>中心点</label>
    <label><input type="checkbox" checked>交点</label>
    <label><input type="checkbox" checked>垂点</label>
    <label><input type="checkbox">切点</label>
    <label><input type="checkbox">四分点</label>
    <label><input type="checkbox">节点</label>
    <label><input type="checkbox" checked>顶点</label>
    <label class="faint"><input type="checkbox">投影</label>
    <label class="faint wide"><input type="checkbox">停用</label>
  </div>
  <div class="status">
    <div class="coords">
      <button class="cell">工作平面</button>
      <span class="cell">x 63.250</span>
      <span class="cell">y 145.320</span>
      <span class="cell">z 0.000</span>
      <span class="cell">毫米</span>
      <button class="cell"><i class="swatch black"></i>默认</button>
    </div>
    <div class="modes">
      <button>锁定格点</button>
      <button>正交</button>
      <button class="on">平面模式</button>
      <button class="on">物件锁点</button>
      <button>智慧轨迹</button>
      <button class="on">操作轴</button>
      <button class="on">记录建构历史</button>
      <button>过滤器</button>
      <span>绝对公差: 0.01</span>
    </div>
  </div>
</footer>
</body>
</html>
```

FILE: styles.css
```css
* { box-sizing: border-box; }

body {
  margin: 0;
  min-height: 100vh;
  display: flex;
  flex-direction: column;
  background: #e4e7ec;
  color: #222;
  font: 8px/12px "Open Sans", "Noto Sans CJK SC", sans-serif;
  overflow-x: hidden;
}

button {
  margin: 0;
  padding: 0;
  border: 0;
  background: none;
  color: inherit;
  font: inherit;
  white-space: nowrap;
}

.sprite { position: absolute; }

.tool {
  position: relative;
  flex: none;
  width: 14px;
  height: 14px;
}
.tool svg { display: block; width: 100%; height: 100%; }
.fly::after {
  content: "";
  position: absolute;
  right: -2px;
  bottom: -2px;
  border: 2px solid;
  border-color: transparent #666 #666 transparent;
}
.tool-small { width: 8px; height: 8px; }
.more { font-size: 10px; line-height: 10px; }

/* Ribbon */
.tabs {
  display: flex;
  justify-content: space-between;
  height: 16px;
  padding: 1px 0 0 3px;
  background: #fbfbfc;
  border-top: 1px solid #e1e4ea;
}
.tab {
  padding: 0 9px;
  border-right: 1px solid #eeeff2;
  border-radius: 0 6px 0 0;
  font-size: 8px;
}
.tab-active {
  padding: 0 9px 0 10px;
  background: #fff;
  border-right-color: #d3d6dc;
}
.tabs-end {
  display: flex;
  align-items: center;
  gap: 2px;
  padding: 0 1px;
  background: #dfe3ec;
}
.bar {
  display: flex;
  align-items: center;
  gap: 14px;
  height: 21px;
  padding: 0 9px 2px 5px;
  background: linear-gradient(#fafbfc, #e4e7eb);
}
.bar-tools { flex: 1; display: flex; justify-content: space-between; }
.bar-second {
  gap: 4px;
  height: 25px;
  padding-bottom: 4px;
  background: linear-gradient(#fff, #e5e8ec);
}

/* Workspace */
.workspace {
  flex: 1;
  display: grid;
  grid-template-columns: 45px minmax(0, 1fr) 121px 16px;
  min-height: 494px;
}
.palette {
  display: grid;
  grid-template-columns: 18px 18px;
  grid-auto-rows: 1fr;
  place-items: center;
  justify-content: start;
  padding: 4px 0 10px;
}
.lit { background: #fff; }
.viewport {
  position: relative;
  margin-right: 5px;
  border-right: 1px solid #c3c8d2;
  background: linear-gradient(#f8f9fc 0%, #dfe6f4 25%, #cfdef4 43%, #b5cef3 70%, #a3c0f2 88%, #9abaf2 100%);
}
.scene { position: absolute; inset: 0; width: 100%; height: 100%; }
.axis { font: 12px "Open Sans", sans-serif; }
.axis-x { fill: #dd3050; }
.axis-y { fill: #2faf72; }
.axis-z { fill: #2638c8; }
.view-title {
  position: absolute;
  top: 0;
  left: 0;
  display: flex;
  align-items: center;
  gap: 5px;
  padding: 0 3px;
  background: #0d86d6;
  color: #0b1a33;
}
.caret {
  border: 2px solid transparent;
  border-top: 3px solid #0b1a33;
  border-bottom: 0;
}

/* Layers panel */
.panel {
  display: flex;
  flex-direction: column;
  margin: 7px 0 1px;
  background: #fff;
  border-right: 1px solid #c9cdd5;
}
.panel-tools {
  display: flex;
  gap: 5px;
  padding: 5px 0 6px 6px;
  overflow: hidden;
}
.panel-tools .tool { width: 10px; height: 10px; }
.layers {
  width: 100%;
  table-layout: fixed;
  border-collapse: collapse;
  margin-bottom: auto;
}
.layers th, .layers td {
  height: 12px;
  padding: 0;
  border-bottom: 1px solid #f1f2f4;
  font-size: 8px;
  line-height: 11px;
  font-weight: 400;
  text-align: left;
  white-space: nowrap;
}
.layers td:first-child { padding-left: 4px; }
.layers th:first-child { padding-left: 2px; }
.layers .current td { font-weight: 700; }
.layers svg { display: block; width: 9px; height: 9px; }
.layers .c-name { width: 55px; }
.layers .c-ico { width: 10px; }
.layers .c-mat { padding-left: 2px; }
.swatch { display: block; width: 8px; height: 8px; }
.black { background: #000; }
.red { background: #f0281b; }
.blue { background: #1484e4; }
.green { background: #10b41c; }
.pink { background: #ee1d92; }
.scroll { display: flex; height: 11px; background: #f1f2f3; }
.arrow { width: 11px; }
.arrow svg { display: block; width: 8px; height: 8px; margin: auto; fill: none; stroke: #333; }
.track { flex: 1; }
.thumb { width: 48%; height: 100%; background: #cdcdcd; }

/* Side tabs */
.side {
  display: flex;
  flex-direction: column;
  align-items: flex-start;
  padding: 7px 0 1px 1px;
}
.side-tab {
  display: flex;
  flex-direction: column;
  align-items: center;
  width: 15px;
  padding: 1px 0 5px;
  background: #f2f3f6;
  border-bottom: 1px solid #d0d4dc;
  clip-path: polygon(0 0, 100% 0, 100% calc(100% - 6px), 0 100%);
}
.side-active { background: #fff; }
.side-tab svg { width: 11px; height: 11px; }
.side-tab span { writing-mode: vertical-rl; line-height: 14px; }
.side-gear { margin: auto 0 0 7px; }

/* Footer */
.foot { border-bottom: 1px solid #3a3638; }
.snaps {
  display: flex;
  gap: 4px;
  padding: 4px 5px 0;
}
.snaps label { display: flex; align-items: center; gap: 2px; line-height: 12px; }
.snaps input {
  appearance: none;
  display: grid;
  place-items: center;
  width: 9px;
  height: 9px;
  margin: 0;
  background: #fff;
  border: 1px solid #a9aeb6;
}
.snaps input:checked::after {
  content: "";
  width: 5px;
  height: 3px;
  border: solid #444;
  border-width: 0 0 1px 1px;
  rotate: -45deg;
}
.snaps .faint input { background: #e9ebee; border-color: #d5d8dd; }
.wide { margin-left: 8px; }
.status {
  display: flex;
  height: 11px;
  line-height: 10px;
  border-top: 1px solid #cdd1d8;
}
.coords {
  flex: none;
  display: grid;
  grid-template-columns: 38px 51px 54px 56px 52px 108px;
}
.cell {
  display: flex;
  align-items: center;
  justify-content: center;
  gap: 1px;
  border-right: 1px solid #d3d6dc;
}
.coords .cell:last-child { justify-content: start; padding-left: 3px; }
.modes { display: flex; gap: 5px; padding-left: 1px; white-space: nowrap; }
.on { font-weight: 700; color: #000; }
```
